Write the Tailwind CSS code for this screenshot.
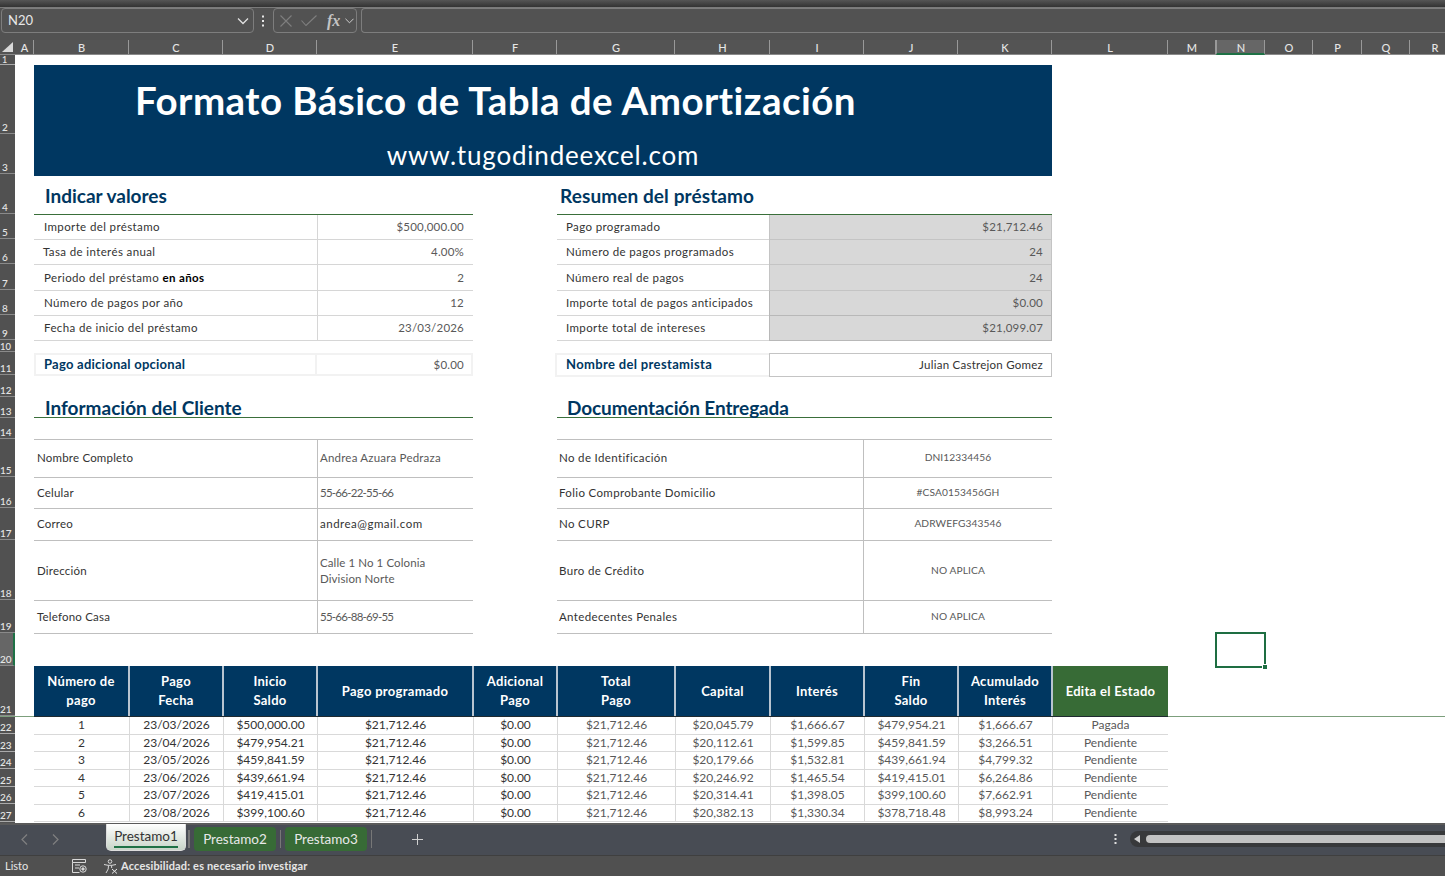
<!DOCTYPE html>
<html lang="es"><head><meta charset="utf-8"><title>Formato Básico de Tabla de Amortización</title>
<script src="https://cdn.jsdelivr.net/npm/@tailwindcss/browser@4"></script></head>
<body class="m-0 bg-white">
<div class="relative flex h-[876px] w-[1445px] flex-col overflow-hidden bg-white font-['Lato','Liberation_Sans',sans-serif]">

<!-- top strip + formula bar -->
<div class="h-[8px] shrink-0 border-b border-[#7a7a7a] bg-gradient-to-b from-[#555] to-[#333]"></div>
<div class="flex h-[32px] shrink-0 items-start gap-0 bg-[#525252] pl-[1px]">
  <div class="flex h-[25px] w-[253px] items-center justify-between rounded-[4px] border border-[#7d7d7d] pl-[6px] pr-[4px] text-[13px] text-[#e8e8e8]">
    <span>N20</span>
    <svg class="h-[8px] w-[12px]" viewBox="0 0 12 8" fill="none" stroke="#e0e0e0" stroke-width="1.3"><path d="M1 1.5l5 5 5-5"/></svg>
  </div>
  <svg class="ml-[7px] mt-[7px] h-[12px] w-[4px]" viewBox="0 0 4 12" fill="#e8e8e8"><rect x="1" y="0.5" width="2" height="2"/><rect x="1" y="5" width="2" height="2"/><rect x="1" y="9.5" width="2" height="2"/></svg>
  <div class="ml-[8px] flex h-[25px] w-[84px] items-center rounded-[4px] border border-[#7d7d7d] pl-[6px]">
    <svg class="h-[12px] w-[12px]" viewBox="0 0 12 12" fill="none" stroke="#7f7f7f" stroke-width="1.1"><path d="M0.5 0.5l11 11M11.5 0.5l-11 11"/></svg>
    <svg class="ml-[9px] h-[11px] w-[16px]" viewBox="0 0 16 11" fill="none" stroke="#7f7f7f" stroke-width="1.1"><path d="M0.5 5.5l4.5 5L15.5 0.5"/></svg>
    <span class="ml-[10px] w-[13px] font-['Liberation_Serif',serif] text-[16px] font-bold italic leading-none text-[#c4c4c4]">fx</span>
    <svg class="ml-[5px] h-[6px] w-[9px]" viewBox="0 0 10 6" fill="none" stroke="#d0d0d0" stroke-width="1.1"><path d="M0.5 0.5l4.5 4.5 4.5-4.5"/></svg>
  </div>
  <div class="ml-[4px] h-[25px] flex-1 rounded-l-[4px] border-y border-l border-[#7d7d7d]"></div>
</div>

<!-- column headers -->
<div class="flex h-[15px] shrink-0 border-b border-[#8a8a8a] bg-[#545454] text-center text-[11px] font-medium leading-[15px] text-[#e6e6e6] [&>div]:shrink-0 [&>div]:pl-[1px]">
  <div class="flex w-[15px] items-end justify-end pb-[2px] pr-[2px]"><svg class="h-[10px] w-[11px] shrink-0" viewBox="0 0 11 10" fill="#d9d9d9"><path d="M11 0v10H0z"/></svg></div>
  <div class="w-[19px] border-r border-[#999]">A</div>
  <div class="w-[95px] border-r border-[#999]">B</div>
  <div class="w-[94px] border-r border-[#999]">C</div>
  <div class="w-[94px] border-r border-[#999]">D</div>
  <div class="w-[156px] border-r border-[#999]">E</div>
  <div class="w-[84px] border-r border-[#999]">F</div>
  <div class="w-[118px] border-r border-[#999]">G</div>
  <div class="w-[95px] border-r border-[#999]">H</div>
  <div class="w-[94px] border-r border-[#999]">I</div>
  <div class="w-[94px] border-r border-[#999]">J</div>
  <div class="w-[94px] border-r border-[#999]">K</div>
  <div class="w-[116px] border-r border-[#999]">L</div>
  <div class="w-[48px] border-r border-[#999]">M</div>
  <div class="h-[15px] w-[49px] border-x border-b-2 border-x-[#999] border-b-[#1e7145] bg-[#666]">N</div>
  <div class="w-[48px] border-r border-[#999]">O</div>
  <div class="w-[49px] border-r border-[#999]">P</div>
  <div class="w-[48px] border-r border-[#999]">Q</div>
  <div class="w-[49px]">R</div>
</div>

<!-- body -->
<div class="relative flex h-[768px] shrink-0 overflow-hidden">
  <!-- row headers -->
  <div class="flex w-[15px] shrink-0 flex-col bg-[#515151] text-[10px] font-medium leading-none text-[#e6e6e6]">
    <div class="flex h-[10px] shrink-0 items-end border-b border-[#aaa] pl-[2px] text-[9px] leading-[9px]">1</div>
    <div class="flex h-[69px] shrink-0 items-end border-b border-[#8a8a8a] pb-[1px] pl-[2px]">2</div>
    <div class="flex h-[40px] shrink-0 items-end border-b border-[#8a8a8a] pb-[1px] pl-[2px]">3</div>
    <div class="flex h-[40px] shrink-0 items-end border-b border-[#8a8a8a] pb-[1px] pl-[2px]">4</div>
    <div class="flex h-[25px] shrink-0 items-end border-b border-[#8a8a8a] pb-[1px] pl-[2px]">5</div>
    <div class="flex h-[25px] shrink-0 items-end border-b border-[#8a8a8a] pb-[1px] pl-[2px]">6</div>
    <div class="flex h-[26px] shrink-0 items-end border-b border-[#8a8a8a] pb-[1px] pl-[2px]">7</div>
    <div class="flex h-[25px] shrink-0 items-end border-b border-[#8a8a8a] pb-[1px] pl-[2px]">8</div>
    <div class="flex h-[25px] shrink-0 items-end border-b border-[#8a8a8a] pb-[1px] pl-[2px]">9</div>
    <div class="flex h-[12px] shrink-0 items-end border-b border-[#8a8a8a] text-[9.5px]">10</div>
    <div class="flex h-[23px] shrink-0 items-end border-b border-[#8a8a8a] pb-[1px]">11</div>
    <div class="flex h-[22px] shrink-0 items-end border-b border-[#8a8a8a] pb-[1px]">12</div>
    <div class="flex h-[21px] shrink-0 items-end border-b border-[#8a8a8a] pb-[1px]">13</div>
    <div class="flex h-[21px] shrink-0 items-end border-b border-[#8a8a8a] pb-[1px]">14</div>
    <div class="flex h-[38px] shrink-0 items-end border-b border-[#8a8a8a] pb-[1px]">15</div>
    <div class="flex h-[31px] shrink-0 items-end border-b border-[#8a8a8a] pb-[1px]">16</div>
    <div class="flex h-[32px] shrink-0 items-end border-b border-[#8a8a8a] pb-[1px]">17</div>
    <div class="flex h-[60px] shrink-0 items-end border-b border-[#8a8a8a] pb-[1px]">18</div>
    <div class="flex h-[33px] shrink-0 items-end border-b border-[#8a8a8a] pb-[1px]">19</div>
    <div class="flex h-[33px] shrink-0 items-end border-r-2 border-b border-r-[#1e7145] border-b-[#8a8a8a] bg-[#666] pb-[1px]">20</div>
    <div class="flex h-[50px] shrink-0 items-end border-b border-[#8a8a8a] pb-[1px]">21</div>
    <div class="flex h-[18px] shrink-0 items-end border-b border-[#aaa] pb-[1px]">22</div>
    <div class="flex h-[17.5px] shrink-0 items-end border-b border-[#aaa] pb-[1px]">23</div>
    <div class="flex h-[17.5px] shrink-0 items-end border-b border-[#aaa] pb-[1px]">24</div>
    <div class="flex h-[17.5px] shrink-0 items-end border-b border-[#aaa] pb-[1px]">25</div>
    <div class="flex h-[17.5px] shrink-0 items-end border-b border-[#aaa] pb-[1px]">26</div>
    <div class="flex h-[17.5px] shrink-0 items-end border-b border-[#aaa] pb-[1px]">27</div>
  </div>

  <!-- sheet -->
  <div class="flex flex-1 flex-col pl-[19px] pt-[10px]">
    <!-- banner -->
    <div class="flex h-[111px] w-[1018px] shrink-0 flex-col bg-[#003761] text-white">
      <div class="h-[73px] pl-[101px] pt-[10px] text-[38.5px] font-bold leading-[50px] tracking-[0.45px] whitespace-nowrap">Formato Básico de Tabla de Amortización</div>
      <div class="text-center text-[26px] leading-[34px] tracking-[0.8px] whitespace-nowrap">www.tugodindeexcel.com</div>
    </div>

    <!-- indicar / resumen -->
    <div class="flex shrink-0 gap-[84px]">
      <div class="w-[439px]">
        <div class="h-[39px] border-b border-[#3a6f3a] pl-[11px] pt-[6px] text-[19px] font-bold leading-[28px] text-[#003761]">Indicar valores</div>
        <div class="grid grid-cols-[284px_155px] text-[11.5px] tracking-[0.38px] text-[#333] [&>div:nth-child(even)]:tracking-[0.2px]">
          <div class="flex h-[25px] items-center border-b border-r border-[#d6d6d6] pl-[10px]">Importe del préstamo</div><div class="flex h-[25px] items-center justify-end border-b border-[#d6d6d6] pr-[9px] text-[#595959]">$500,000.00</div>
          <div class="flex h-[25px] items-center border-b border-r border-[#d6d6d6] pl-[9px]">Tasa de interés anual</div><div class="flex h-[25px] items-center justify-end border-b border-[#d6d6d6] pr-[9px] text-[#595959]">4.00%</div>
          <div class="flex h-[26px] items-center border-b border-r border-[#d6d6d6] pl-[10px]"><span class="whitespace-pre">Periodo del préstamo <b class="text-black">en años</b></span></div><div class="flex h-[26px] items-center justify-end border-b border-[#d6d6d6] pr-[9px] text-[#595959]">2</div>
          <div class="flex h-[25px] items-center border-b border-r border-[#d6d6d6] pl-[10px]">Número de pagos por año</div><div class="flex h-[25px] items-center justify-end border-b border-[#d6d6d6] pr-[9px] text-[#595959]">12</div>
          <div class="flex h-[25px] items-center border-b border-r border-[#d6d6d6] pl-[10px]">Fecha de inicio del préstamo</div><div class="flex h-[25px] items-center justify-end border-b border-[#d6d6d6] pr-[9px] text-[#595959]">23/03/2026</div>
        </div>
        <div class="mt-[12px] grid h-[23px] grid-cols-[281px_1fr] border-2 border-[#f2f2f2] text-[#595959]">
          <div class="flex items-center border-r-2 border-[#f2f2f2] pl-[8px] text-[13px] font-bold tracking-[0.25px] text-[#003761]">Pago adicional opcional</div>
          <div class="flex items-center justify-end pr-[7px] text-[11.5px] tracking-[0.2px]">$0.00</div>
        </div>
      </div>
      <div class="w-[495px]">
        <div class="h-[39px] border-b border-[#3a6f3a] pl-[3px] pt-[6px] text-[19px] font-bold leading-[28px] tracking-[0.1px] text-[#003761]">Resumen del préstamo</div>
        <div class="grid grid-cols-[212px_283px] text-[11.5px] tracking-[0.38px] text-[#333] [&>div:nth-child(even)]:tracking-[0.2px]">
          <div class="flex h-[25px] items-center border-b border-[#d6d6d6] pl-[9px]">Pago programado</div><div class="flex h-[25px] items-center justify-end border-b border-l border-r border-[#c4c4c4] bg-[#d8d8d8] pr-[8px] text-[#595959]">$21,712.46</div>
          <div class="flex h-[25px] items-center border-b border-[#d6d6d6] pl-[9px]">Número de pagos programados</div><div class="flex h-[25px] items-center justify-end border-b border-l border-r border-[#c4c4c4] bg-[#d8d8d8] pr-[8px] text-[#595959]">24</div>
          <div class="flex h-[26px] items-center border-b border-[#d6d6d6] pl-[9px]">Número real de pagos</div><div class="flex h-[26px] items-center justify-end border-b border-l border-r border-[#c4c4c4] bg-[#d8d8d8] pr-[8px] text-[#595959]">24</div>
          <div class="flex h-[25px] items-center border-b border-[#d6d6d6] pl-[9px]">Importe total de pagos anticipados</div><div class="flex h-[25px] items-center justify-end border-b border-l border-r border-[#b8b8b8] bg-[#d8d8d8] pr-[8px] text-[#595959]">$0.00</div>
          <div class="flex h-[25px] items-center border-b border-[#d6d6d6] pl-[9px]">Importe total de intereses</div><div class="flex h-[25px] items-center justify-end border-b border-l border-r border-[#b8b8b8] bg-[#d8d8d8] pr-[8px] text-[#595959]">$21,099.07</div>
        </div>
        <div class="-ml-[2px] mt-[12px] grid h-[23px] grid-cols-[214px_283px]">
          <div class="flex items-center border-2 border-r-0 border-[#f2f2f2] pl-[9px] text-[13px] font-bold tracking-[0.35px] text-[#003761]">Nombre del prestamista</div>
          <div class="flex items-center justify-end border border-[#c4c4c4] pr-[8px] text-[11.5px] tracking-[0.25px] text-[#333]">Julian Castrejon Gomez</div>
        </div>
      </div>
    </div>

    <!-- cliente / documentacion -->
    <div class="flex shrink-0 gap-[84px]">
      <div class="w-[439px]">
        <div class="h-[42px] border-b border-[#3a6f3a] pl-[11px] pt-[21px] text-[19px] font-bold leading-[22px] text-[#003761]">Información del Cliente</div>
        <div class="mt-[21px] grid grid-cols-[284px_155px] border-t border-[#bfbfbf] text-[11.5px] tracking-[0.2px] text-[#333]">
          <div class="flex h-[38px] items-center border-b border-r border-[#bfbfbf] pb-[1px] pl-[3px]">Nombre Completo</div><div class="flex h-[38px] items-center border-b border-[#bfbfbf] pb-[1px] pl-[2px] text-[#595959]">Andrea Azuara Pedraza</div>
          <div class="flex h-[31px] items-center border-b border-r border-[#bfbfbf] pb-[1px] pl-[3px]">Celular</div><div class="flex h-[31px] items-center border-b border-[#bfbfbf] pb-[1px] pl-[2px] tracking-[-0.75px] text-[#595959]">55-66-22-55-66</div>
          <div class="flex h-[32px] items-center border-b border-r border-[#bfbfbf] pb-[2px] pl-[3px]">Correo</div><div class="flex h-[32px] items-center border-b border-[#bfbfbf] pb-[2px] pl-[2px] tracking-[0.5px] text-[#333]">andrea@gmail.com</div>
          <div class="flex h-[60px] items-center border-b border-r border-[#bfbfbf] pl-[3px]">Dirección</div><div class="flex h-[60px] items-center border-b border-[#bfbfbf] pl-[2px] leading-[16px] tracking-[0.1px] text-[#595959]"><span>Calle 1 No 1 Colonia<br>Division Norte</span></div>
          <div class="flex h-[33px] items-center border-b border-r border-[#bfbfbf] pl-[3px]">Telefono Casa</div><div class="flex h-[33px] items-center border-b border-[#bfbfbf] pl-[2px] tracking-[-0.75px] text-[#595959]">55-66-88-69-55</div>
        </div>
      </div>
      <div class="w-[495px]">
        <div class="h-[42px] border-b border-[#3a6f3a] pl-[10px] pt-[21px] text-[19px] font-bold leading-[22px] tracking-[-0.1px] text-[#003761]">Documentación Entregada</div>
        <div class="mt-[21px] grid grid-cols-[307px_188px] border-t border-[#bfbfbf] text-[11.5px] tracking-[0.35px] text-[#333]">
          <div class="flex h-[38px] items-center border-b border-r border-[#bfbfbf] pb-[1px] pl-[2px]">No de Identificación</div><div class="flex h-[38px] items-center justify-center border-b border-[#bfbfbf] pb-[1px] text-[10.2px] tracking-[0.1px] text-[#595959]">DNI12334456</div>
          <div class="flex h-[31px] items-center border-b border-r border-[#bfbfbf] pb-[1px] pl-[2px]">Folio Comprobante Domicilio</div><div class="flex h-[31px] items-center justify-center border-b border-[#bfbfbf] pb-[1px] text-[10.2px] tracking-[0.1px] text-[#595959]">#CSA0153456GH</div>
          <div class="flex h-[32px] items-center border-b border-r border-[#bfbfbf] pb-[2px] pl-[2px]">No CURP</div><div class="flex h-[32px] items-center justify-center border-b border-[#bfbfbf] pb-[2px] text-[10.2px] tracking-[0.1px] text-[#595959]">ADRWEFG343546</div>
          <div class="flex h-[60px] items-center border-b border-r border-[#bfbfbf] pl-[2px]">Buro de Crédito</div><div class="flex h-[60px] items-center justify-center border-b border-[#bfbfbf] text-[10.2px] tracking-[0.1px] text-[#595959]">NO APLICA</div>
          <div class="flex h-[33px] items-center border-b border-r border-[#bfbfbf] pl-[2px]">Antedecentes Penales</div><div class="flex h-[33px] items-center justify-center border-b border-[#bfbfbf] text-[10.2px] tracking-[0.1px] text-[#595959]">NO APLICA</div>
        </div>
      </div>
    </div>

    <!-- table -->
    <div class="mt-[32px] grid h-[50px] w-[1134px] shrink-0 grid-cols-[96px_94px_94px_156px_84px_118px_95px_94px_94px_94px_115px] text-center text-[13px] font-bold leading-[19px] tracking-[0.3px] text-white">
      <div class="flex items-center justify-center border-r-2 border-[#b8c4d0] bg-[#003761]">Número de<br>pago</div>
      <div class="flex items-center justify-center border-r-2 border-[#b8c4d0] bg-[#003761]">Pago<br>Fecha</div>
      <div class="flex items-center justify-center border-r-2 border-[#b8c4d0] bg-[#003761]">Inicio<br>Saldo</div>
      <div class="flex items-center justify-center border-r-2 border-[#b8c4d0] bg-[#003761]">Pago programado</div>
      <div class="flex items-center justify-center border-r-2 border-[#b8c4d0] bg-[#003761]">Adicional<br>Pago</div>
      <div class="flex items-center justify-center border-r-2 border-[#b8c4d0] bg-[#003761]">Total<br>Pago</div>
      <div class="flex items-center justify-center border-r-2 border-[#b8c4d0] bg-[#003761]">Capital</div>
      <div class="flex items-center justify-center border-r-2 border-[#b8c4d0] bg-[#003761]">Interés</div>
      <div class="flex items-center justify-center border-r-2 border-[#b8c4d0] bg-[#003761]">Fin<br>Saldo</div>
      <div class="flex items-center justify-center border-r-2 border-[#b8c4d0] bg-[#003761]">Acumulado<br>Interés</div>
      <div class="flex items-center justify-center bg-[#376b36]">Edita el Estado</div>
    </div>
    <div class="relative z-10 h-[1px] w-[1134px] shrink-0 bg-[#1f2a30]"></div>
    <div class="grid w-[1134px] shrink-0 grid-cols-[96px_94px_94px_156px_84px_118px_95px_94px_94px_94px_115px] auto-rows-[17.5px] text-center text-[12px] leading-[15px] text-[#333] [&>div]:border-b [&>div]:border-[#d9d9d9] [&>div:not(:nth-child(11n))]:border-r">
      <div>1</div><div>23/03/2026</div><div>$500,000.00</div><div>$21,712.46</div><div>$0.00</div><div class="text-[#595959]">$21,712.46</div><div class="text-[#595959]">$20,045.79</div><div class="text-[#595959]">$1,666.67</div><div class="text-[#595959]">$479,954.21</div><div class="text-[#595959]">$1,666.67</div><div class="text-[#595959]">Pagada</div>
      <div>2</div><div>23/04/2026</div><div>$479,954.21</div><div>$21,712.46</div><div>$0.00</div><div class="text-[#595959]">$21,712.46</div><div class="text-[#595959]">$20,112.61</div><div class="text-[#595959]">$1,599.85</div><div class="text-[#595959]">$459,841.59</div><div class="text-[#595959]">$3,266.51</div><div class="text-[#595959]">Pendiente</div>
      <div>3</div><div>23/05/2026</div><div>$459,841.59</div><div>$21,712.46</div><div>$0.00</div><div class="text-[#595959]">$21,712.46</div><div class="text-[#595959]">$20,179.66</div><div class="text-[#595959]">$1,532.81</div><div class="text-[#595959]">$439,661.94</div><div class="text-[#595959]">$4,799.32</div><div class="text-[#595959]">Pendiente</div>
      <div>4</div><div>23/06/2026</div><div>$439,661.94</div><div>$21,712.46</div><div>$0.00</div><div class="text-[#595959]">$21,712.46</div><div class="text-[#595959]">$20,246.92</div><div class="text-[#595959]">$1,465.54</div><div class="text-[#595959]">$419,415.01</div><div class="text-[#595959]">$6,264.86</div><div class="text-[#595959]">Pendiente</div>
      <div>5</div><div>23/07/2026</div><div>$419,415.01</div><div>$21,712.46</div><div>$0.00</div><div class="text-[#595959]">$21,712.46</div><div class="text-[#595959]">$20,314.41</div><div class="text-[#595959]">$1,398.05</div><div class="text-[#595959]">$399,100.60</div><div class="text-[#595959]">$7,662.91</div><div class="text-[#595959]">Pendiente</div>
      <div>6</div><div>23/08/2026</div><div>$399,100.60</div><div>$21,712.46</div><div>$0.00</div><div class="text-[#595959]">$21,712.46</div><div class="text-[#595959]">$20,382.13</div><div class="text-[#595959]">$1,330.34</div><div class="text-[#595959]">$378,718.48</div><div class="text-[#595959]">$8,993.24</div><div class="text-[#595959]">Pendiente</div>
    </div>
  </div>

  <!-- freeze line and selected cell sit over the grid -->
  <div class="absolute left-0 right-0 top-[661px] h-[1px] bg-[#7c9f7c]"></div>
  <div class="absolute left-[1215px] top-[577px] h-[36px] w-[51px] border-2 border-[#1e6e42]"></div>
  <div class="absolute left-[1262px] top-[609px] h-[6px] w-[6px] border border-white bg-[#1e6e42]"></div>
</div>

<!-- sheet tabs -->
<div class="relative flex h-[32px] shrink-0 items-center border-t-2 border-[#5a5a5a] bg-[#484c54] pb-[2px] text-[13.5px] text-[#e8e8e8]">
  <svg class="ml-[21px] h-[11px] w-[7px]" viewBox="0 0 7 11" fill="none" stroke="#808080" stroke-width="1.2"><path d="M6 0.5L1 5.5l5 5"/></svg>
  <svg class="ml-[24px] h-[11px] w-[7px]" viewBox="0 0 7 11" fill="none" stroke="#808080" stroke-width="1.2"><path d="M1 0.5l5 5-5 5"/></svg>
  <div class="ml-[47px] -mt-[3px] flex h-[27px] w-[80px] flex-col items-center rounded-b-[5px] border border-t-0 border-[#ddd] bg-gradient-to-b from-white to-[#c8d4c8] pt-[3px] text-[#333]">
    <span class="leading-[18px]">Prestamo1</span><span class="mt-[1px] h-[2px] w-[64px] bg-[#1e7145]"></span>
  </div>
  <div class="ml-[2px] h-[18px] w-[2px] bg-[#777]"></div>
  <div class="ml-[4px] flex h-[24px] w-[82px] items-center justify-center rounded-[4px] bg-[#376b36]">Prestamo2</div>
  <div class="ml-[4px] h-[18px] w-[1px] bg-[#777]"></div>
  <div class="ml-[4px] flex h-[24px] w-[82px] items-center justify-center rounded-[4px] bg-[#376b36]">Prestamo3</div>
  <div class="ml-[4px] h-[18px] w-[1px] bg-[#777]"></div>
  <svg class="ml-[40px] h-[11px] w-[11px]" viewBox="0 0 11 11" stroke="#d0d0d0" stroke-width="1"><path d="M5.5 0v11M0 5.5h11"/></svg>
  <svg class="ml-[691px] h-[10px] w-[3px]" viewBox="0 0 3 10" fill="#e0e0e0"><rect x="0.5" y="0" width="2" height="2"/><rect x="0.5" y="4" width="2" height="2"/><rect x="0.5" y="8" width="2" height="2"/></svg>
  <div class="ml-[13px] flex h-[16px] flex-1 items-center rounded-l-[8px] bg-[#38393b] pl-[4px]">
    <svg class="h-[8px] w-[6px]" viewBox="0 0 6 8" fill="#d0d0d0"><path d="M6 0v8L0 4z"/></svg>
    <div class="ml-[6px] h-[8px] flex-1 rounded-l-[4px] bg-[#c2c2c2]"></div>
  </div>
</div>

<!-- status bar -->
<div class="flex h-[21px] shrink-0 items-center border-t border-[#3f3f3f] bg-[#505050] text-[11px] text-[#e6e6e6]">
  <span class="ml-[5px] w-[67px]">Listo</span>
  <svg class="h-[14px] w-[15px]" viewBox="0 0 15 14" fill="none" stroke="#d8d8d8" stroke-width="1"><path d="M0.5 0.5h13v3h-13zM0.5 3.5v10h7M3 6h5M3 9h4"/><circle cx="11" cy="10" r="3.2"/><circle cx="11" cy="10" r="1.2" fill="#d8d8d8"/></svg>
  <svg class="ml-[16px] h-[15px] w-[15px]" viewBox="0 0 15 15" fill="none" stroke="#d8d8d8" stroke-width="1"><circle cx="7" cy="2.5" r="1.8"/><path d="M1 5.5l4 .8h4l4-.8M5.5 6.5l-.3 3.5L3 14M8.5 6.5l.2 2.5"/><path d="M9 10l5 4.5M14 10l-5 4.5" stroke="#e8e8e8"/></svg>
  <span class="ml-[3px] font-bold tracking-[0.17px]">Accesibilidad: es necesario investigar</span>
</div>
</div>
</body></html>
